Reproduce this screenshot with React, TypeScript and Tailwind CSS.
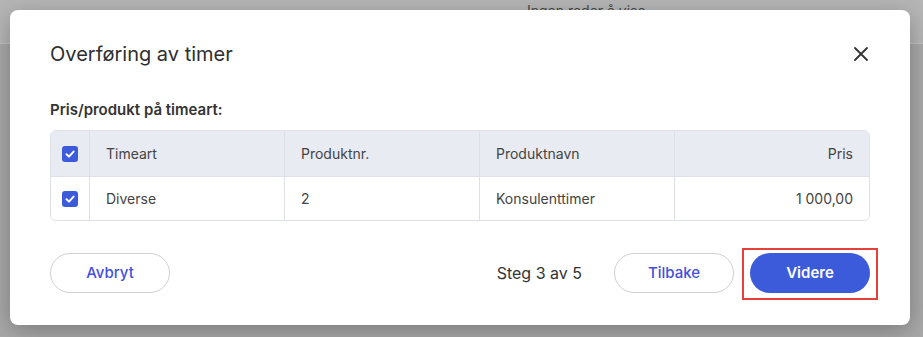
import React from "react";

function Check() {
  return (
    <span className="flex h-4 w-4 items-center justify-center rounded-[3px] bg-[#3b5bdb]">
      <svg width="12" height="12" viewBox="0 0 12 12" fill="none">
        <path d="M2.5 6.2 L5 8.6 L9.6 3.6" stroke="white" strokeWidth="2" strokeLinecap="round" strokeLinejoin="round" />
      </svg>
    </span>
  );
}

export default function App() {
  const font = { fontFamily: "Inter, 'Noto Sans', sans-serif" };
  return (
    <div className="relative h-[337px] w-[923px] overflow-hidden bg-[#a9a9a9]" style={font}>
      <div className="flex h-[44px] border-b border-[#c2c2c2] bg-[#b6b6b6]">
        <span className="ml-[527px] mt-[1px] text-[14px] leading-[20px] text-[#4a4a4a]">Ingen rader å vise</span>
      </div>
      <div className="absolute inset-0 p-[10px] pr-[13px]">
        <div className="flex h-[315px] flex-col rounded-[8px] bg-white px-[40px] shadow-[0_6px_24px_rgba(0,0,0,0.28)]">
          <div className="flex h-[90px] items-center justify-between pb-[2px]">
            <h1 className="text-[20px] font-normal text-[#2e2e2e]">Overføring av timer</h1>
            <svg width="16" height="16" viewBox="0 0 16 16" className="mr-[1px]">
              <path d="M2 2 L14 14 M14 2 L2 14" stroke="#333" strokeWidth="1.8" strokeLinecap="round" />
            </svg>
          </div>
          <div className="text-[15px] font-semibold leading-[20px] text-[#333]">Pris/produkt på timeart:</div>
          <div className="mt-[10px] overflow-hidden rounded-[6px] border border-[#dde0e7] text-[14px] text-[#444]">
            <div className="flex h-[45px] items-center bg-[#e8ebf2]">
              <div className="flex h-full w-[39px] items-center justify-center border-r border-[#dde0e7]">
                <Check />
              </div>
              <div className="flex h-full w-[195px] items-center border-r border-[#dde0e7] pl-[16px]">Timeart</div>
              <div className="flex h-full w-[195px] items-center border-r border-[#dde0e7] pl-[16px]">Produktnr.</div>
              <div className="flex h-full w-[195px] items-center border-r border-[#dde0e7] pl-[16px]">Produktnavn</div>
              <div className="flex h-full flex-1 items-center justify-end pr-[16px]">Pris</div>
            </div>
            <div className="flex h-[44px] items-center border-t border-[#dde0e7] bg-white">
              <div className="flex h-full w-[39px] items-center justify-center border-r border-[#dde0e7]">
                <Check />
              </div>
              <div className="flex h-full w-[195px] items-center border-r border-[#dde0e7] pl-[16px]">Diverse</div>
              <div className="flex h-full w-[195px] items-center border-r border-[#dde0e7] pl-[16px]">2</div>
              <div className="flex h-full w-[195px] items-center border-r border-[#dde0e7] pl-[16px]">Konsulenttimer</div>
              <div className="flex h-full flex-1 items-center justify-end pr-[16px]">1 000,00</div>
            </div>
          </div>
          <div className="mt-[32px] flex items-center">
            <button className="h-[40px] w-[120px] rounded-full border border-[#cfcfd4] text-[15px] font-medium text-[#3f4fe0]">Avbryt</button>
            <div className="flex-1" />
            <span className="mr-[32px] text-[16px] text-[#333]">Steg 3 av 5</span>
            <button className="h-[40px] w-[120px] rounded-full border border-[#cfcfd4] text-[15px] font-medium text-[#3f4fe0]">Tilbake</button>
            <div className="-mb-[7px] -mr-[8px] -mt-[5px] ml-[8px] border-2 border-[#e5403a] px-[6px] pb-[5px] pt-[3px]">
              <button className="block h-[40px] w-[120px] rounded-full bg-[#3b5bdb] text-[15px] font-semibold text-white">Videre</button>
            </div>
          </div>
        </div>
      </div>
    </div>
  );
}
